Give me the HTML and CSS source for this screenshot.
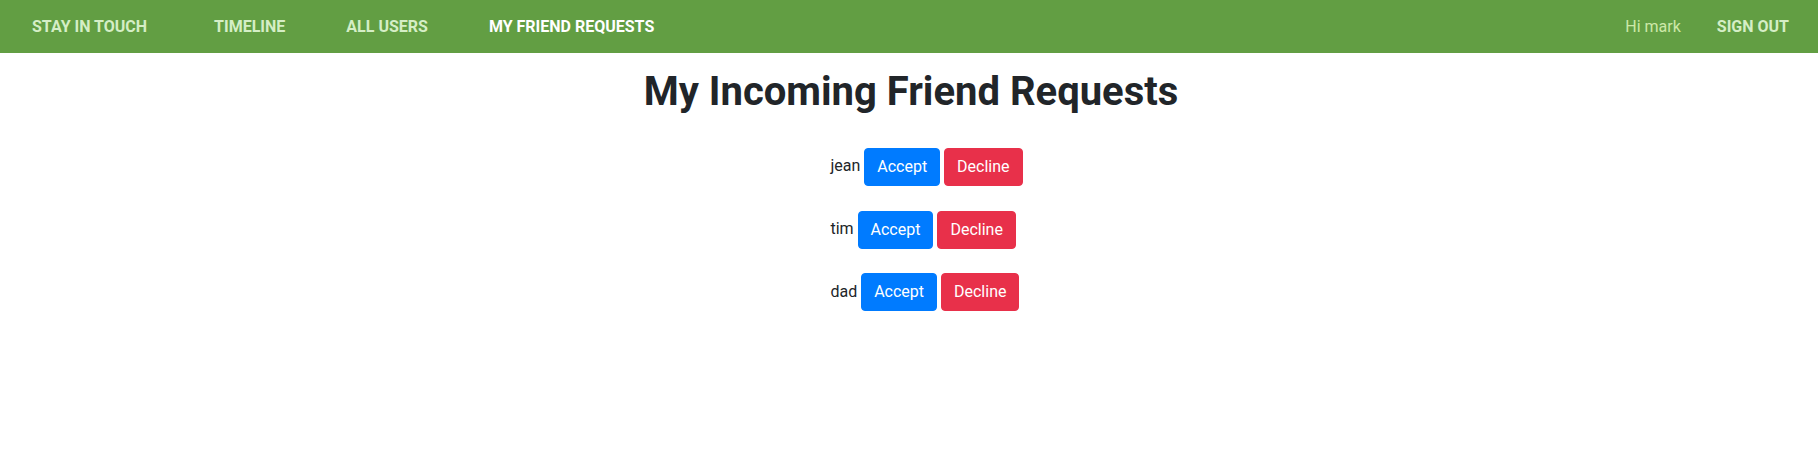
FILE: index.html
```html
<!DOCTYPE html>
<html>
<head>
<meta charset="utf-8">
<link rel="stylesheet" href="styles.css">
</head>
<body>
<nav class="navbar">
  <div class="nav-left">
    <a class="brand">Stay in touch</a>
    <a class="nav-link">Timeline</a>
    <a class="nav-link">All users</a>
    <a class="nav-link active">My friend requests</a>
  </div>
  <div class="nav-right">
    <span class="greeting">Hi mark</span>
    <a class="nav-link signout">Sign out</a>
  </div>
</nav>
<main class="content">
  <h1 class="title">My Incoming Friend Requests</h1>
  <ul class="requests">
    <li class="request">jean <button class="btn btn-accept">Accept</button> <button class="btn btn-decline">Decline</button></li>
    <li class="request">tim <button class="btn btn-accept">Accept</button> <button class="btn btn-decline">Decline</button></li>
    <li class="request">dad <button class="btn btn-accept">Accept</button> <button class="btn btn-decline">Decline</button></li>
  </ul>
</main>
</body>
</html>
```
FILE: styles.css
```css
* { box-sizing: border-box; }
body {
  margin: 0;
  font-family: Roboto, "Liberation Sans", sans-serif;
  font-size: 16px;
  line-height: 1.5;
  color: #212529;
  background: #fff;
}
.navbar {
  height: 53px;
  background: #629e43;
  display: flex;
  justify-content: space-between;
  align-items: center;
  padding: 0 29px 0 32px;
}
.nav-left, .nav-right {
  display: flex;
  align-items: center;
}
.nav-left a, .nav-right a {
  font-weight: 700;
  text-transform: uppercase;
  color: #d5eec6;
  text-decoration: none;
  font-size: 16px;
}
.brand { margin-right: 67px; }
.nav-link { margin-right: 61px; }
.nav-left .nav-link:last-child { margin-right: 0; }
.nav-link.active { color: #fff; }
.greeting {
  color: #cde8a8;
  font-size: 16px;
  margin-right: 36px;
}
.nav-right .signout { margin-right: 0; }
.content {
  display: flex;
  flex-direction: column;
  align-items: center;
}
.title {
  font-size: 40px;
  font-weight: 700;
  line-height: 1.2;
  margin: 15px 0 31px;
  padding-left: 4px;
}
.requests {
  list-style: none;
  margin: 0;
  padding: 0 0 0 35px;
  display: flex;
  flex-direction: column;
  align-items: flex-start;
  gap: 24px;
}
.request {
  line-height: 38px;
}
.btn {
  font-family: inherit;
  font-size: 16px;
  line-height: 1.5;
  padding: 6px 12px;
  border: 1px solid transparent;
  border-radius: 4px;
  color: #fff;
  cursor: pointer;
  vertical-align: middle;
}
.btn-accept { background: #007bff; border-color: #007bff; }
.btn-decline { background: #e8304a; border-color: #e8304a; }
```
